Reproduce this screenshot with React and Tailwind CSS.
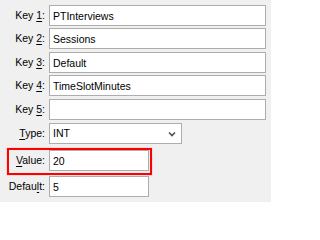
import React from 'react';

const font = { fontFamily: '"Liberation Sans", Arial, sans-serif' };

function Label({ before, accel, after }) {
  return (
    <label className="w-[49px] shrink-0 pr-[4px] text-right text-[10.5px] leading-none text-black whitespace-nowrap">
      {before}
      <span className="underline underline-offset-[2px]">{accel}</span>
      {after}
    </label>
  );
}

function TextBox({ value, className }) {
  return (
    <input
      readOnly
      defaultValue={value}
      className={`h-[21px] border border-[#adadad] bg-white px-[3px] text-[10.5px] text-black outline-none ${className}`}
    />
  );
}

export default function App() {
  return (
    <div className="h-[202px] w-[271px] overflow-hidden bg-[#f0f0f0] pt-[5px]" style={font}>
      <div className="flex items-center">
        <Label before="Key " accel="1" after=":" />
        <TextBox value="PTInterviews" className="w-[217px]" />
      </div>
      <div className="mt-[2px] flex items-center">
        <Label before="Key " accel="2" after=":" />
        <TextBox value="Sessions" className="w-[217px]" />
      </div>
      <div className="mt-[3px] flex items-center">
        <Label before="Key " accel="3" after=":" />
        <TextBox value="Default" className="w-[217px]" />
      </div>
      <div className="mt-[2px] flex items-center">
        <Label before="Key " accel="4" after=":" />
        <TextBox value="TimeSlotMinutes" className="w-[217px]" />
      </div>
      <div className="mt-[3px] flex items-center">
        <Label before="Key " accel="5" after=":" />
        <TextBox value="" className="w-[217px]" />
      </div>
      <div className="mt-[3px] flex items-center">
        <Label before="" accel="T" after="ype:" />
        <div className="flex h-[21px] w-[133px] items-center justify-between border border-[#adadad] bg-white pl-[3px] pr-[5px] text-[10.5px] text-black">
          <span>INT</span>
          <svg width="8" height="6" viewBox="0 0 8 6" className="mt-[1px]">
            <path d="M1 1.5 L4 4.5 L7 1.5" fill="none" stroke="#505050" strokeWidth="1.6" />
          </svg>
        </div>
      </div>
      <div className="relative mt-[6px] flex items-center">
        <Label before="" accel="V" after="alue:" />
        <TextBox value="20" className="w-[100px]" />
        <span className="pointer-events-none absolute left-[7px] top-[-2px] h-[27px] w-[145px] border-2 border-[#ff0000] shadow-[0_0_1px_#ff8080]" />
      </div>
      <div className="mt-[5px] flex items-center">
        <Label before="Defau" accel="l" after="t:" />
        <TextBox value="5" className="w-[100px]" />
      </div>
    </div>
  );
}
